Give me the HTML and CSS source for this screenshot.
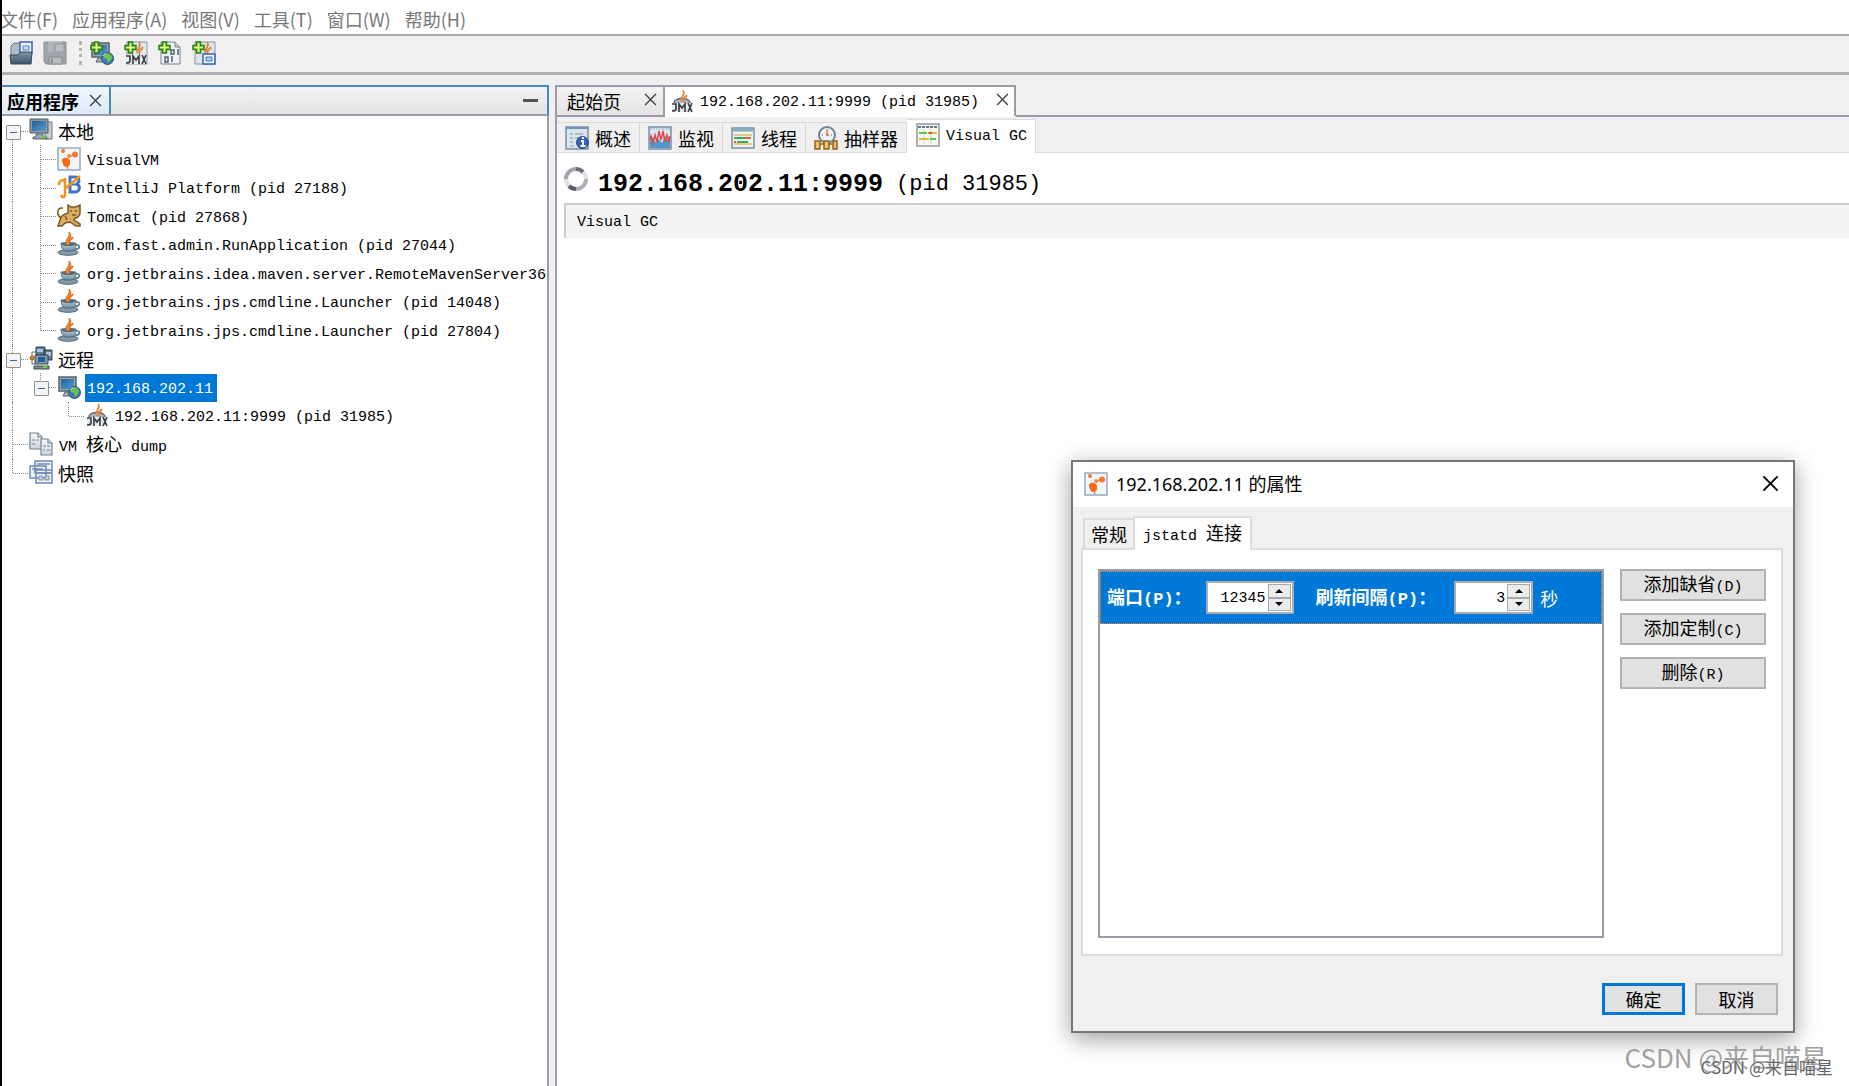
FILE: index.html
```html
<!DOCTYPE html>
<html lang="zh-CN">
<head>
<meta charset="utf-8">
<title>VisualVM</title>
<link rel="stylesheet" href="styles.css">
</head>
<body>
<svg class="defs" aria-hidden="true">
  <defs>
    <linearGradient id="g-blue" x1="0" y1="0" x2="1" y2="1"><stop offset="0" stop-color="#17619f"/><stop offset="1" stop-color="#5b9dc9"/></linearGradient>
    <linearGradient id="g-paper" x1="0" y1="0" x2="0" y2="1"><stop offset="0" stop-color="#f5f8fa"/><stop offset="1" stop-color="#c9d6df"/></linearGradient>
    <linearGradient id="g-steel" x1="0" y1="0" x2="0" y2="1"><stop offset="0" stop-color="#7d96aa"/><stop offset="1" stop-color="#3d5369"/></linearGradient>
    <linearGradient id="g-cup" x1="0" y1="0" x2="0" y2="1"><stop offset="0" stop-color="#c3d3df"/><stop offset="1" stop-color="#6f8da3"/></linearGradient>
    <symbol id="plus" viewBox="0 0 24 24"><path d="M4.500 1h4v3.500H12v4H8.500V12h-4V8.500H1v-4h3.500z" fill="#a5e63c" stroke="#2c7d12" stroke-width="1.500"/><path d="M6.500 2.500v8M2.500 6.500h8" stroke="#e4ffb0" stroke-width="1.200"/></symbol>
    <symbol id="globe" viewBox="0 0 24 24"><circle cx="17.500" cy="17.500" r="6" fill="#3c7bb0" stroke="#2b5679"/><path d="M14 14c2-2 5-2 6-1l2 3-1 3-3 3-1-4-3-1z" fill="#6cc64e"/><path d="M13 15c1-2 2-2 3-2" stroke="#d8efff" fill="none"/></symbol>
    <symbol id="flame" viewBox="0 0 24 24"><path d="M12 13c-4-4 3-6 1-12 4 4-2 6 0 9M14 13c-2-3 3-3 3-7-5 2-4 5-3 7" fill="#f29a50" stroke="#db711d" stroke-width=".8"/></symbol>
    <symbol id="monitor" viewBox="0 0 24 24"><path d="M2 2h17v14H2z" fill="#9aa7b0" stroke="#56626b" stroke-width="1.500"/><path d="M4 4h13v10H4z" fill="url(#g-blue)"/><path d="M8 17h6l2 4H6z" fill="#aab4ba" stroke="#59636b"/></symbol>
    <symbol id="i-local" viewBox="0 0 24 24"><path d="M16 4h7v17h-7z" fill="#c6cdd1" stroke="#6c757c"/><path d="M1 1h18v14H1z" fill="#8e9aa3" stroke="#4d5962"/><path d="M3 3h14v10H3z" fill="url(#g-blue)"/><path d="M7 16h7v3h4v2H4v-2h3z" fill="#9ca8af" stroke="#58636c"/><path d="M13 19h4" stroke="#65cf32" stroke-width="2"/></symbol>
    <symbol id="i-vvm" viewBox="0 0 24 24"><path d="M1 1h22v22H1z" fill="#f3f6f9" stroke="#92abc2" stroke-width="1.500"/><path d="M7 11c4-1 7 2 6 6-1 4-6 4-7 0-1-3-2-5 1-6z" fill="#f56a16"/><circle cx="12" cy="9" r="2" fill="#f58a4b"/><circle cx="18" cy="7.500" r="3" fill="#f7772b"/><circle cx="6" cy="4" r="2" fill="#f7772b"/><path d="M12 10l6-3M10 19l1 3" stroke="#f7772b" stroke-width="1.200"/></symbol>
    <symbol id="i-ij" viewBox="0 0 24 24"><path d="M13 2h5c5 0 5 6 1 7 5 1 4 8-1 8h-5z" fill="none" stroke="#4374c9" stroke-width="3"/><path d="M13 9.500h6" stroke="#4374c9" stroke-width="2"/><path d="M2 10c0-6 6-6 6-2V3M8 8v11c0 4-3 4-4 1M23 1L9 13" fill="none" stroke="#ef9419" stroke-width="2.500"/></symbol>
    <symbol id="i-cat" viewBox="0 0 24 24"><path d="M11 1l3 2h5l4-2v8c0 3-3 5-5 5l-1 2 6 4v2h-4l-6-4-5 1-3 3H1l1-3 2-6c2-3 5-3 7-4z" fill="#d6ad63" stroke="#80571b" stroke-width="1.500"/><path d="M4 14C-1 11 0 3 6 4M8 12l2 4M13 7h2M18 7h2M15 11h4" fill="none" stroke="#80571b" stroke-width="1.500"/></symbol>
    <symbol id="i-java" viewBox="0 0 24 24"><ellipse cx="11" cy="20.500" rx="10" ry="2.800" fill="#8299aa" stroke="#4e6678"/><path d="M19 13c5-1 4 5-1 4" fill="none" stroke="#607d92" stroke-width="1.800"/><path d="M4 11h15c0 5-2 8-5 8H9c-3 0-5-4-5-8z" fill="url(#g-cup)" stroke="#4e6678"/><ellipse cx="11.500" cy="12" rx="7" ry="2" fill="#53697a"/><path d="M10 13C6 8 14 6 12 0c5 5-2 7 1 12M13 12c-2-3 3-4 3-7-4 2-5 4-3 7" fill="#f08b38" stroke="#d56a17"/></symbol>
    <symbol id="jmxword" viewBox="0 0 24 24"><path d="M2 14h20v9H2z" fill="#ececec"/><path d="M2 15h4v5q0 2-4 2M9 23v-8l3 4 3-4v8M18 14l4 9M22 14l-4 9" fill="none" stroke="#3b4146" stroke-width="1.700"/></symbol>
    <symbol id="i-jmx" viewBox="0 0 24 24"><path d="M4 14c0-6 16-6 16 0" fill="#aebac3" stroke="#59636b" stroke-width="1.500"/><use href="#flame"/><use href="#jmxword"/></symbol>
    <symbol id="i-remote" viewBox="0 0 24 24"><path d="M7 1h9v8H7zM15 4h8v10h-8z" fill="#607a8e" stroke="#34424e"/><path d="M8 3h6v3H8zM17 6h5v4h-5z" fill="#a9c5df"/><path d="M6 9h13v9H6z" fill="#8997a2" stroke="#34424e"/><path d="M9 11h7v5H9z" fill="#175fa7"/><path d="M5 20h15v3H5z" fill="#7b8790" stroke="#424d55"/><path d="M14 21h4" stroke="#65d52d" stroke-width="2"/><path d="M3 11v-5h4M3 12v6h3" fill="none" stroke="#5b6870"/><circle cx="3" cy="12" r="2" fill="#e48b25" stroke="#94530d"/></symbol>
    <symbol id="i-host" viewBox="0 0 24 24"><use href="#monitor"/><use href="#globe"/></symbol>
    <symbol id="i-dump" viewBox="0 0 24 24"><g fill="url(#g-paper)" stroke="#748490" stroke-width="1.200"><path d="M1 1h8l4 4v12H1z"/><path d="M9 1v4h4"/><path d="M12 7h7l4 4v12H12z"/><path d="M19 7v4h4"/></g><path d="M3 8h3M7 8h3M3 12h3M14 14h3M18 14h3M14 18h2M18 18h3" stroke="#748490" stroke-width="1.200"/></symbol>
    <symbol id="i-snap" viewBox="0 0 24 24"><g fill="#edf2f9" stroke="#7189bc" stroke-width="1.500"><path d="M6 1h17v12H6zM1 6h16v12H1zM7 10h16v13H7z"/></g><path d="M8 4h13M3 9h11M9 13h12" stroke="#7189bc" stroke-width="1.500"/><path d="M10 16h4v4h-4zM16 16h4v4h-4z" fill="#c3ccd9" stroke="#8791a3"/></symbol>
    <symbol id="i-open" viewBox="0 0 24 24"><path d="M2 22V5l3-3h8v9h9v11z" fill="#afbdc8" stroke="#66798a"/><path d="M11 1h12v11H11z" fill="#eaf3fc" stroke="#3e63ae" stroke-width="1.500"/><path d="M14 5h6v4h-6z" fill="#c8ddf4" stroke="#4e83c8"/><path d="M1 14h8l3-3h11l-1 12H2z" fill="url(#g-steel)" stroke="#354b5e"/></symbol>
    <symbol id="i-save" viewBox="0 0 24 24"><path d="M1 1h22v22H3l-2-2z" fill="#9fa5aa" stroke="#8b9298"/><path d="M5 1h14v10H5z" fill="#aeb4b8"/><path d="M12 3h9v8h-9z" fill="#b9bec1" stroke="#90979c"/><path d="M6 16h13v7H6z" fill="#b8babc" stroke="#82888c"/><path d="M9 18v4" stroke="#858a8e" stroke-width="2"/></symbol>
    <symbol id="i-addhost" viewBox="0 0 24 24"><use href="#monitor"/><use href="#globe"/><use href="#plus"/></symbol>
    <symbol id="i-addjmx" viewBox="0 0 24 24"><path d="M3 1h20v22H3z" fill="#e2e9ee" stroke="#8798a5"/><use href="#flame" x="2"/><use href="#jmxword"/><use href="#plus"/></symbol>
    <symbol id="i-addbin" viewBox="0 0 24 24"><path d="M3 1h14l5 5v17H3z" fill="#eef2f4" stroke="#778690"/><path d="M17 1v5h5" fill="#c6d0d8" stroke="#778690"/><path d="M7 16h3v5H7zM13 9h3v4h-3zM14 15v6M20 8v6" fill="none" stroke="#53616b" stroke-width="1.500"/><use href="#plus"/></symbol>
    <symbol id="i-addsnap" viewBox="0 0 24 24"><path d="M3 1h20v22H3z" fill="#dce4eb" stroke="#8798a5"/><use href="#flame" x="2"/><path d="M11 13h12v10H11z" fill="#edf4fc" stroke="#3e64af" stroke-width="1.500"/><path d="M14 16h6v4h-6z" fill="#a9cdf1" stroke="#3e7cc4"/><use href="#plus"/></symbol>
    <symbol id="i-info" viewBox="0 0 24 24"><path d="M1 1h22v22H1z" fill="#dbe5ed" stroke="#7790a5" stroke-width="1.500"/><path d="M1 1h22v2H1z" fill="#7295b5"/><path d="M5 8h3M10 8h8M5 12h3M10 12h5M5 16h3M5 20h4" stroke="#8096a8" stroke-width="1.200"/><circle cx="17.500" cy="16.500" r="6" fill="#3b62b4" stroke="#234787"/><path d="M16 15h2v5M15.500 20h5M17 12h2" fill="none" stroke="#fff" stroke-width="1.800"/></symbol>
    <symbol id="i-mon" viewBox="0 0 24 24"><path d="M1 1h22v22H1z" fill="#dce7f0" stroke="#7593aa" stroke-width="1.500"/><path d="M2 22v-7l3-4 2 5 4-3 3 4 3-7 2 4 3-3v11z" fill="#5394ca"/><path d="M2 14l1-4 2 7 2-8 2 7 2-11 2 9 2-9 2 11 2-7 2 6 1-5" fill="none" stroke="#dd4b4b" stroke-width="1.500"/><path d="M2 3h20" stroke="#90aabd" stroke-dasharray="2 1"/></symbol>
    <symbol id="i-thread" viewBox="0 0 24 24"><path d="M1 2h22v20H1z" fill="#eef2ef" stroke="#7791a2" stroke-width="1.500"/><path d="M2 4h20" stroke="#8aaac4" stroke-width="3"/><path d="M3 9h18M3 18h18" stroke="#e3c986" stroke-width="2"/><path d="M3 12h11M6 16h11" stroke="#40a660" stroke-width="2"/><path d="M14 12h6M3 16h2" stroke="#d86345" stroke-width="2"/></symbol>
    <symbol id="i-sampler" viewBox="0 0 24 24"><circle cx="13" cy="9" r="8" fill="#e9f1f8" stroke="#718295" stroke-width="2"/><path d="M13 3v7M12 9h3M8 9h1M17 9h1" fill="none" stroke="#d57b43" stroke-width="1.500"/><path d="M1 15h5v8H1zM10 15h5v8h-5zM19 15h4v8h-4zM6 18h4M15 18h4" fill="#ebc168" stroke="#926418" stroke-width="1.500"/></symbol>
    <symbol id="i-gc" viewBox="0 0 24 24"><path d="M1 1h22v22H1z" fill="#f5f7f4" stroke="#919aa0" stroke-width="1.500"/><path d="M2 4h20" stroke="#63768b" stroke-width="2" stroke-dasharray="3 1"/><path d="M8 6v15M15 6v15" stroke="#d3dacf"/><path d="M3 10h8M14 16h6" stroke="#5cc747" stroke-width="2"/><path d="M12 10h9M3 16h10" stroke="#e3b92e" stroke-width="2"/><path d="M13 10h3" stroke="#df513d" stroke-width="2"/></symbol>
    <symbol id="i-spin" viewBox="0 0 24 24"><g fill="none" stroke-width="4"><path d="M12 2a10 10 0 0 0-10 10" stroke="#a4a5ac"/><path d="M2 12a10 10 0 0 0 3 7" stroke="#dddde1"/><path d="M5 19a10 10 0 0 0 7 3" stroke="#595b66"/><path d="M12 22a10 10 0 0 0 10-10" stroke="#b0b1b8"/><path d="M22 12a10 10 0 0 0-3-7" stroke="#e2e2e6"/><path d="M19 5a10 10 0 0 0-7-3" stroke="#6d6f78"/></g></symbol>
    <symbol id="i-x" viewBox="0 0 12 12"><path d="M1 1l10 10M11 1L1 11" stroke="currentColor" stroke-width="1.300" fill="none"/></symbol>
  </defs>
</svg>
<div class="app">
  <nav class="menubar">
    <button>文件(F)</button><button>应用程序(A)</button><button>视图(V)</button><button>工具(T)</button><button>窗口(W)</button><button>帮助(H)</button>
  </nav>
  <div class="toolbar">
    <button aria-label="打开"><svg class="icon"><use href="#i-open"/></svg></button>
    <button aria-label="保存" disabled><svg class="icon"><use href="#i-save"/></svg></button>
    <span class="grip"></span>
    <button aria-label="添加远程主机"><svg class="icon"><use href="#i-addhost"/></svg></button>
    <button aria-label="添加 JMX 连接"><svg class="icon"><use href="#i-addjmx"/></svg></button>
    <button aria-label="添加核心 dump"><svg class="icon"><use href="#i-addbin"/></svg></button>
    <button aria-label="添加快照"><svg class="icon"><use href="#i-addsnap"/></svg></button>
  </div>
  <div class="workspace">
    <aside class="side">
      <div class="side-head">
        <div class="side-tab"><span class="zh">应用程序</span><button class="close" aria-label="关闭"><svg><use href="#i-x"/></svg></button></div>
        <button class="minimise" aria-label="最小化"></button>
      </div>
      <ul class="tree">
        <li><span class="g first box"></span><svg class="icon"><use href="#i-local"/></svg><span class="label zh">本地</span></li>
        <li><span class="g line"></span><span class="g tee"></span><svg class="icon"><use href="#i-vvm"/></svg><span class="label">VisualVM</span></li>
        <li><span class="g line"></span><span class="g tee"></span><svg class="icon"><use href="#i-ij"/></svg><span class="label">IntelliJ Platform (pid 27188)</span></li>
        <li><span class="g line"></span><span class="g tee"></span><svg class="icon"><use href="#i-cat"/></svg><span class="label">Tomcat (pid 27868)</span></li>
        <li><span class="g line"></span><span class="g tee"></span><svg class="icon"><use href="#i-java"/></svg><span class="label">com.fast.admin.RunApplication (pid 27044)</span></li>
        <li><span class="g line"></span><span class="g tee"></span><svg class="icon"><use href="#i-java"/></svg><span class="label">org.jetbrains.idea.maven.server.RemoteMavenServer36</span></li>
        <li><span class="g line"></span><span class="g tee"></span><svg class="icon"><use href="#i-java"/></svg><span class="label">org.jetbrains.jps.cmdline.Launcher (pid 14048)</span></li>
        <li><span class="g line"></span><span class="g end"></span><svg class="icon"><use href="#i-java"/></svg><span class="label">org.jetbrains.jps.cmdline.Launcher (pid 27804)</span></li>
        <li><span class="g tee box"></span><svg class="icon"><use href="#i-remote"/></svg><span class="label zh">远程</span></li>
        <li><span class="g line"></span><span class="g end box"></span><svg class="icon"><use href="#i-host"/></svg><span class="label selected">192.168.202.11</span></li>
        <li><span class="g line"></span><span class="g"></span><span class="g end"></span><svg class="icon"><use href="#i-jmx"/></svg><span class="label">192.168.202.11:9999 (pid 31985)</span></li>
        <li><span class="g tee"></span><svg class="icon"><use href="#i-dump"/></svg><span class="label">VM <span class="zh">核心</span> dump</span></li>
        <li><span class="g end"></span><svg class="icon"><use href="#i-snap"/></svg><span class="label zh">快照</span></li>
      </ul>
    </aside>
    <main class="main">
      <div class="doc-tabs">
        <div class="doc-tab start"><span class="zh">起始页</span><button class="close" aria-label="关闭"><svg><use href="#i-x"/></svg></button></div>
        <div class="doc-tab active"><svg class="icon"><use href="#i-jmx"/></svg><span class="low">192.168.202.11:9999 (pid 31985)</span><button class="close" aria-label="关闭"><svg><use href="#i-x"/></svg></button></div>
        <span class="doc-rest"></span>
      </div>
      <div class="views">
        <button class="view"><svg class="icon"><use href="#i-info"/></svg><span class="zh">概述</span></button>
        <button class="view"><svg class="icon"><use href="#i-mon"/></svg><span class="zh">监视</span></button>
        <button class="view"><svg class="icon"><use href="#i-thread"/></svg><span class="zh">线程</span></button>
        <button class="view"><svg class="icon"><use href="#i-sampler"/></svg><span class="zh">抽样器</span></button>
        <button class="view active"><svg class="icon"><use href="#i-gc"/></svg><span class="low">Visual GC</span></button>
        <span class="views-rest"></span>
      </div>
      <div class="content">
        <h1><svg class="icon"><use href="#i-spin"/></svg><span class="host">192.168.202.11:9999</span><span class="pid">(pid 31985)</span></h1>
        <div class="section">Visual GC</div>
      </div>
    </main>
  </div>

  <section class="dialog" role="dialog" aria-labelledby="dlg-title">
    <header class="dlg-head">
      <svg class="icon"><use href="#i-vvm"/></svg>
      <h2 id="dlg-title">192.168.202.11 的属性</h2>
      <button class="dlg-close" aria-label="关闭"><svg><use href="#i-x"/></svg></button>
    </header>
    <div class="dlg-body">
      <div class="dlg-tabs">
        <button class="dlg-tab zh">常规</button>
        <button class="dlg-tab active">jstatd <span class="zh">连接</span></button>
      </div>
      <div class="dlg-panel">
        <div class="list">
          <div class="conn">
            <label for="port"><span class="zh">端口</span>(P)<span class="zh">：</span></label>
            <span class="spinner port"><input id="port" type="text" value="12345"><span class="steps"><button class="up" aria-label="增加"></button><button class="down" aria-label="减少"></button></span></span>
            <label for="interval"><span class="zh">刷新间隔</span>(P)<span class="zh">：</span></label>
            <span class="spinner interval"><input id="interval" type="text" value="3"><span class="steps"><button class="up" aria-label="增加"></button><button class="down" aria-label="减少"></button></span></span>
            <span class="unit zh">秒</span>
          </div>
        </div>
        <div class="actions">
          <button class="btn"><span class="zh">添加缺省</span>(D)</button>
          <button class="btn"><span class="zh">添加定制</span>(C)</button>
          <button class="btn"><span class="zh">删除</span>(R)</button>
        </div>
      </div>
      <footer class="dlg-foot">
        <button class="btn zh primary">确定</button>
        <button class="btn zh">取消</button>
      </footer>
    </div>
  </section>
  <div class="mark large">CSDN @来自喵星</div>
  <div class="mark small">CSDN @来自喵星</div>
</div>
</body>
</html>
```
FILE: styles.css
```css
* { box-sizing: border-box; }
body {
  margin: 0;
  background: #fff;
  color: #000;
  font: 15px/20px "Liberation Mono", "Noto Sans CJK SC", monospace;
}
button {
  margin: 0;
  padding: 0;
  border: 0;
  background: none;
  color: inherit;
  font: inherit;
}
.defs { position: absolute; width: 0; height: 0; }
.icon { display: block; flex: none; width: 24px; height: 24px; }
.zh { font-family: "Noto Sans CJK SC", sans-serif; font-size: 18px; }
.low { padding-top: 4px; }

.app {
  position: relative;
  display: flex;
  flex-direction: column;
  min-height: 100vh;
  overflow: hidden;
  border-left: 2px solid #000;
}
.menubar {
  display: flex;
  gap: 14px;
  height: 34px;
  margin-left: -2px;
  padding-top: 3px;
  color: #777;
  font: 18px/32px "Noto Sans CJK SC", sans-serif;
}
.toolbar {
  display: flex;
  align-items: center;
  gap: 10px;
  height: 41px;
  padding: 0 7px 2px;
  background: #f0f0f0;
  border-top: 2px solid #aaa;
  border-bottom: 3px solid #b0b0b0;
}
.grip { width: 3px; height: 24px; margin: 0 -2px 0 2px; border-left: 3px dotted #b5b5b5; }

.workspace {
  flex: 1;
  display: flex;
  gap: 6px;
  padding-top: 10px;
  background: #f0f0f0;
}
.side {
  flex: none;
  width: 547px;
  background: #fff;
  border-right: 2px solid #9a9da6;
}
.side-head {
  display: flex;
  align-items: center;
  justify-content: space-between;
  height: 31px;
  margin-right: -2px;
  padding-right: 9px;
  background: linear-gradient(#f2f2f2, #e4e4e4);
  border: solid #4a88b8;
  border-width: 2px 2px 0 0;
  border-bottom: 2px solid #9a9da6;
}
.side-tab {
  display: flex;
  align-items: center;
  gap: 10px;
  height: 27px;
  padding: 0 7px 0 5px;
  background: linear-gradient(#f0f6fd, #dcebfa);
  border-right: 2px solid #4a88b8;
  font-weight: bold;
}
.close { display: block; width: 13px; height: 13px; color: #444; }
.close svg, .dlg-close svg { display: block; width: 100%; height: 100%; }
.minimise { width: 15px; height: 3px; background: #555; }

.tree { margin: 0 0 0 -1px; padding: 1px 0 0; list-style: none; white-space: nowrap; overflow: hidden; }
.tree li { display: flex; align-items: center; height: 28px; }
.tree li:nth-child(even) { height: 29px; }
.tree .icon { margin-bottom: 2px; }
.g { position: relative; flex: none; align-self: stretch; width: 28px; }
.g::before { content: ""; position: absolute; left: 11px; top: 0; bottom: 0; }
.line::before, .tee::before, .end::before { border-left: 1px dotted #888; }
.end::before { bottom: 50%; }
.first::before { top: 50%; border-left: 1px dotted #888; }
.tee, .end, .first { background: linear-gradient(90deg, #888 1px, transparent 1px) 12px 50% / 2px 1px repeat-x; background-clip: content-box; padding-left: 12px; }
.box::after {
  content: "";
  position: absolute;
  left: 5px;
  top: 8px;
  width: 13px;
  height: 13px;
  border: 1px solid #919191;
  border-radius: 1px;
  background: linear-gradient(#4664a8, #4664a8) 50% 50% / 7px 1px no-repeat #f4f4f4;
}
.label { margin-left: 4px; padding: 4px 4px 0 2px; line-height: 24px; }
.label.zh { padding-top: 0; padding-left: 1px; }
.label .zh { line-height: 20px; }
.selected { background: #0078d7; color: #fff; }

.main {
  flex: 1;
  min-width: 0;
  background: #fff;
  border-left: 2px solid #9a9da6;
}
.doc-tabs { display: flex; height: 32px; background: #f0f0f0; }
.doc-tab {
  display: flex;
  align-items: center;
  gap: 6px;
  border: 2px solid #9a9da6;
  border-left: 0;
}
.doc-tab .close { margin-bottom: 3px; }
.doc-tab.start { gap: 23px; padding: 0 6px 0 10px; background: linear-gradient(#f2f2f2, #e4e4e4); }
.doc-tab.active { padding: 0 5px 0 5px; background: #fff; border-bottom-color: #fff; }
.doc-tab.active .close { margin-left: 11px; }
.doc-rest { flex: 1; border-bottom: 2px solid #9a9da6; }
.views {
  display: flex;
  align-items: flex-end;
  height: 36px;
  background: #f0f0f0;
}
.view {
  display: flex;
  align-items: center;
  gap: 6px;
  height: 31px;
  padding: 0 8px;
  border: solid #dadada;
  border-width: 1px 1px 1px 0;
}
.view.active {
  height: 34px;
  padding: 0 8px 4px 9px;
  background: #fff;
  border-bottom: 0;
}
.views-rest { flex: 1; border-bottom: 1px solid #dadada; }
.content { padding-left: 7px; }
h1 {
  display: flex;
  align-items: center;
  margin: 0;
  height: 50px;
  padding-top: 14px;
  font-size: 25px;
  line-height: 30px;
}
h1 .icon { margin: 0 10px 12px 0; }
.pid { margin-left: 13px; font-size: 22px; font-weight: normal; }
.section {
  height: 35px;
  padding-left: 11px;
  border: solid #ccc;
  border-width: 2px 0 0 2px;
  background: #f3f3f3;
  line-height: 36px;
}

.dialog {
  position: absolute;
  right: 54px;
  top: 460px;
  width: 724px;
  border: 2px solid #777;
  background: #f0f0f0;
  box-shadow: 0 6px 22px rgba(0, 0, 0, .38);
}
.dlg-head {
  display: flex;
  align-items: center;
  gap: 8px;
  height: 45px;
  padding: 0 14px 2px 11px;
  background: #fff;
}
h2 { flex: 1; margin: 0; font: 18px/24px "Noto Sans", "Noto Sans CJK SC", sans-serif; }
.dlg-close { width: 17px; height: 17px; }
.dlg-body { padding: 9px 10px 16px 8px; }
.dlg-tabs { display: flex; align-items: flex-end; padding-left: 2px; }
.dlg-tab {
  height: 30px;
  padding: 0 6px;
  border: solid #dcdcdc;
  border-width: 2px 0 0 2px;
  line-height: 28px;
}
.dlg-tab.active {
  position: relative;
  height: 34px;
  margin-bottom: -2px;
  padding: 0 8px 4px;
  border-right-width: 2px;
  background: #fff;
}
.dlg-panel {
  display: flex;
  gap: 16px;
  height: 408px;
  padding: 19px 15px 16px;
  border: 2px solid #dcdcdc;
  background: #fff;
}
.list { flex: 1; border: 2px solid #969ba5; }
.conn {
  display: flex;
  align-items: center;
  height: 53px;
  padding-left: 6px;
  background: #0078d7;
  border: 1px dotted #f0883a;
  color: #fff;
  font-size: 17px;
  font-weight: bold;
}
.spinner {
  display: flex;
  height: 33px;
  padding: 1px;
  border: 2px solid #a9acb2;
  background: #fff;
  font-size: 15px;
}
.port { width: 88px; margin: 0 22px 0 14px; }
.interval { width: 79px; margin: 0 7px 0 18px; }
.spinner input {
  flex: 1;
  min-width: 0;
  padding: 2px 2px 0 0;
  border: 0;
  outline: 0;
  background: #fff;
  font: inherit;
  font-weight: normal;
  text-align: right;
}
.steps { display: grid; grid-template-rows: 1fr 1fr; width: 23px; }
.steps button { display: grid; place-items: center; border: 1px solid #aaa; background: #ececec; }
.steps button::before { content: ""; border: 4px solid transparent; }
.steps .up::before { border-top: 0; border-bottom-color: #000; }
.steps .down::before { border-bottom: 0; border-top-color: #000; }
.unit { font-weight: normal; }
.actions { display: flex; flex-direction: column; gap: 12px; width: 146px; }
.btn { height: 32px; border: 2px solid #b2b2b2; background: #e1e1e1; }
.dlg-foot { display: flex; justify-content: flex-end; gap: 10px; padding: 27px 5px 0 0; }
.dlg-foot .btn { width: 83px; }
.btn.primary { border: 3px solid #0078d7; }

.mark { position: absolute; font-family: "Noto Sans CJK SC", sans-serif; white-space: nowrap; }
.large { right: 22px; bottom: 13px; color: #a0a0a0; font-size: 26px; line-height: 32px; }
.small { right: 16px; bottom: 7px; color: #666; font-size: 17px; line-height: 24px; text-shadow: 0 0 2px #fff; }
```
